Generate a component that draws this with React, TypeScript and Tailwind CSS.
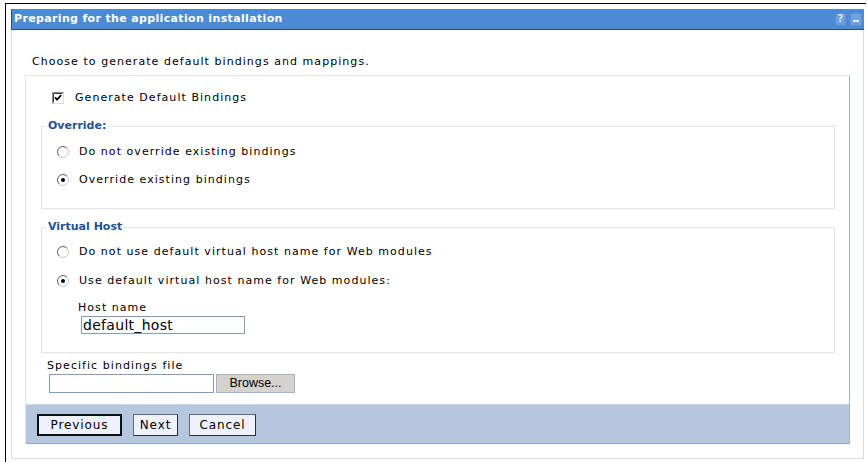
import React from "react";

function Radio({ checked }: { checked?: boolean }) {
  return (
    <svg width="12" height="12" viewBox="0 0 12 12" className="shrink-0">
      <circle cx="6" cy="6" r="5.5" fill="#fff" stroke="#c8c8c8" />
      <path d="M2.1 9.9 A5.5 5.5 0 0 1 9.9 2.1" stroke="#6e6e6e" fill="none" />
      {checked && <circle cx="6" cy="6" r="2" fill="#000" />}
    </svg>
  );
}

function CheckBox() {
  return (
    <svg width="12" height="12" viewBox="0 0 12 12" className="shrink-0">
      <rect x="0.5" y="0.5" width="11" height="11" fill="#fff" stroke="#e0ddd6" />
      <path d="M0.5 11.5 V0.5 H11.5" stroke="#8a8a8a" fill="none" />
      <path d="M1.5 10.5 V1.5 H10.5" stroke="#3c3c3c" fill="none" />
      <path d="M3 5.2 L5 7.6 L9.2 3.2" stroke="#000" strokeWidth="1.7" fill="none" />
    </svg>
  );
}

function RadioRow({ label, checked, tall }: { label: string; checked?: boolean; tall?: boolean }) {
  return (
    <div className={`flex items-center gap-[10px] ${tall ? "h-[29px]" : "h-[28px]"}`}>
      <Radio checked={checked} />
      <span className="leading-[14px]">{label}</span>
    </div>
  );
}

export default function App() {
  return (
    <div className="h-[462px] w-[868px] overflow-hidden bg-white font-['DejaVu_Sans',Verdana,sans-serif] text-[11px] tracking-[1.05px] text-black">
      <div className="ml-[5px] mt-[3px] h-[459px] w-[861px] border-l border-t border-black pl-[5px] pt-[5px]">
        <div className="w-[853px]">
          {/* portlet title bar */}
          <div className="flex h-[21px] items-center justify-between border-b border-l border-[#2f4d73] bg-[#4b8ad5] pl-[2px] pr-[2px]">
            <span className="font-bold leading-[14px] tracking-[0.35px] text-white">
              Preparing for the application installation
            </span>
            <div className="flex items-center gap-[4px] tracking-normal">
              <span className="flex h-[13px] w-[11px] items-center justify-center border border-[#5a8fd6] bg-[#6d9fe2] text-[10px] font-bold leading-none text-[#dbe8f9]">
                ?
              </span>
              <span className="flex h-[13px] w-[12px] items-end justify-center border border-[#5a8fd6] bg-[#6d9fe2] pb-[3px]">
                <span className="h-[2px] w-[6px] bg-[#e3edfa]" />
              </span>
            </div>
          </div>

          {/* portlet body */}
          <div className="border-x border-b border-[#dadada] px-[13px] pb-[14px] pt-[25px]">
            <p className="pl-[7px] leading-[14px]">Choose to generate default bindings and mappings.</p>

            <div className="mt-[6px] border-l border-r border-t border-[#e4e4e4] border-r-[#9db2d7]">
              <div className="pl-[15px] pr-[14px] pt-[12px]">
                <div className="flex h-[20px] items-center gap-[11px] pl-[11px]">
                  <CheckBox />
                  <span className="leading-[14px]">Generate Default Bindings</span>
                </div>

                <fieldset className="mt-[11px] border border-[#e4e4e4] pb-[14px] pl-[5px]">
                  <legend className="px-[1px] font-bold leading-[14px] tracking-normal text-[#24528f]">Override:</legend>
                  <div className="pl-[10px] pt-[5px]">
                    <RadioRow label="Do not override existing bindings" />
                    <RadioRow label="Override existing bindings" checked />
                  </div>
                </fieldset>

                <fieldset className="mt-[11px] border border-[#e4e4e4] pb-[18px] pl-[5px]">
                  <legend className="px-[1px] font-bold leading-[14px] tracking-normal text-[#24528f]">Virtual Host</legend>
                  <div className="pl-[10px] pt-[4px]">
                    <RadioRow label="Do not use default virtual host name for Web modules" />
                    <RadioRow label="Use default virtual host name for Web modules:" checked tall />
                    <div className="mt-[6px] pl-[21px]">
                      <div className="leading-[14px]">Host name</div>
                      <div className="ml-[3px] mt-[1px] flex h-[18px] w-[164px] items-center border border-[#7f9db9] pl-[1px] text-[14px] leading-none tracking-[0.3px]">
                        default_host
                      </div>
                    </div>
                  </div>
                </fieldset>

                <div className="ml-[6px] mt-[6px] leading-[14px]">Specific bindings file</div>
                <div className="ml-[8px] mt-[1px] flex items-center gap-[2px]">
                  <div className="h-[19px] w-[165px] border border-[#7f9db9] bg-white" />
                  <div className="flex h-[19px] w-[79px] items-center justify-center border border-[#a4b3cc] bg-[#d6d3ce] font-['Liberation_Sans',Arial,sans-serif] text-[12.5px] leading-none tracking-normal">
                    Browse...
                  </div>
                </div>
              </div>

              {/* wizard buttons */}
              <div className="mt-[11px] flex h-[40px] items-start gap-[11px] border-b border-t border-b-[#8ea4c9] border-t-[#c9d5e8] bg-[#b5c6df] pl-[11px] pt-[9px] text-[12px] tracking-[0.9px]">
                <button className="flex h-[22px] w-[85px] items-center justify-center border-2 border-[#111] bg-[#eef2fd] leading-none">
                  Previous
                </button>
                <button className="flex h-[22px] w-[45px] items-center justify-center border border-[#6a6a6a] border-b-[#2e2e2e] border-r-[#2e2e2e] bg-[#eef2fd] leading-none">
                  Next
                </button>
                <button className="flex h-[22px] w-[67px] items-center justify-center border border-[#6a6a6a] border-b-[#2e2e2e] border-r-[#2e2e2e] bg-[#eef2fd] leading-none">
                  Cancel
                </button>
              </div>
            </div>
          </div>
        </div>
      </div>
    </div>
  );
}
